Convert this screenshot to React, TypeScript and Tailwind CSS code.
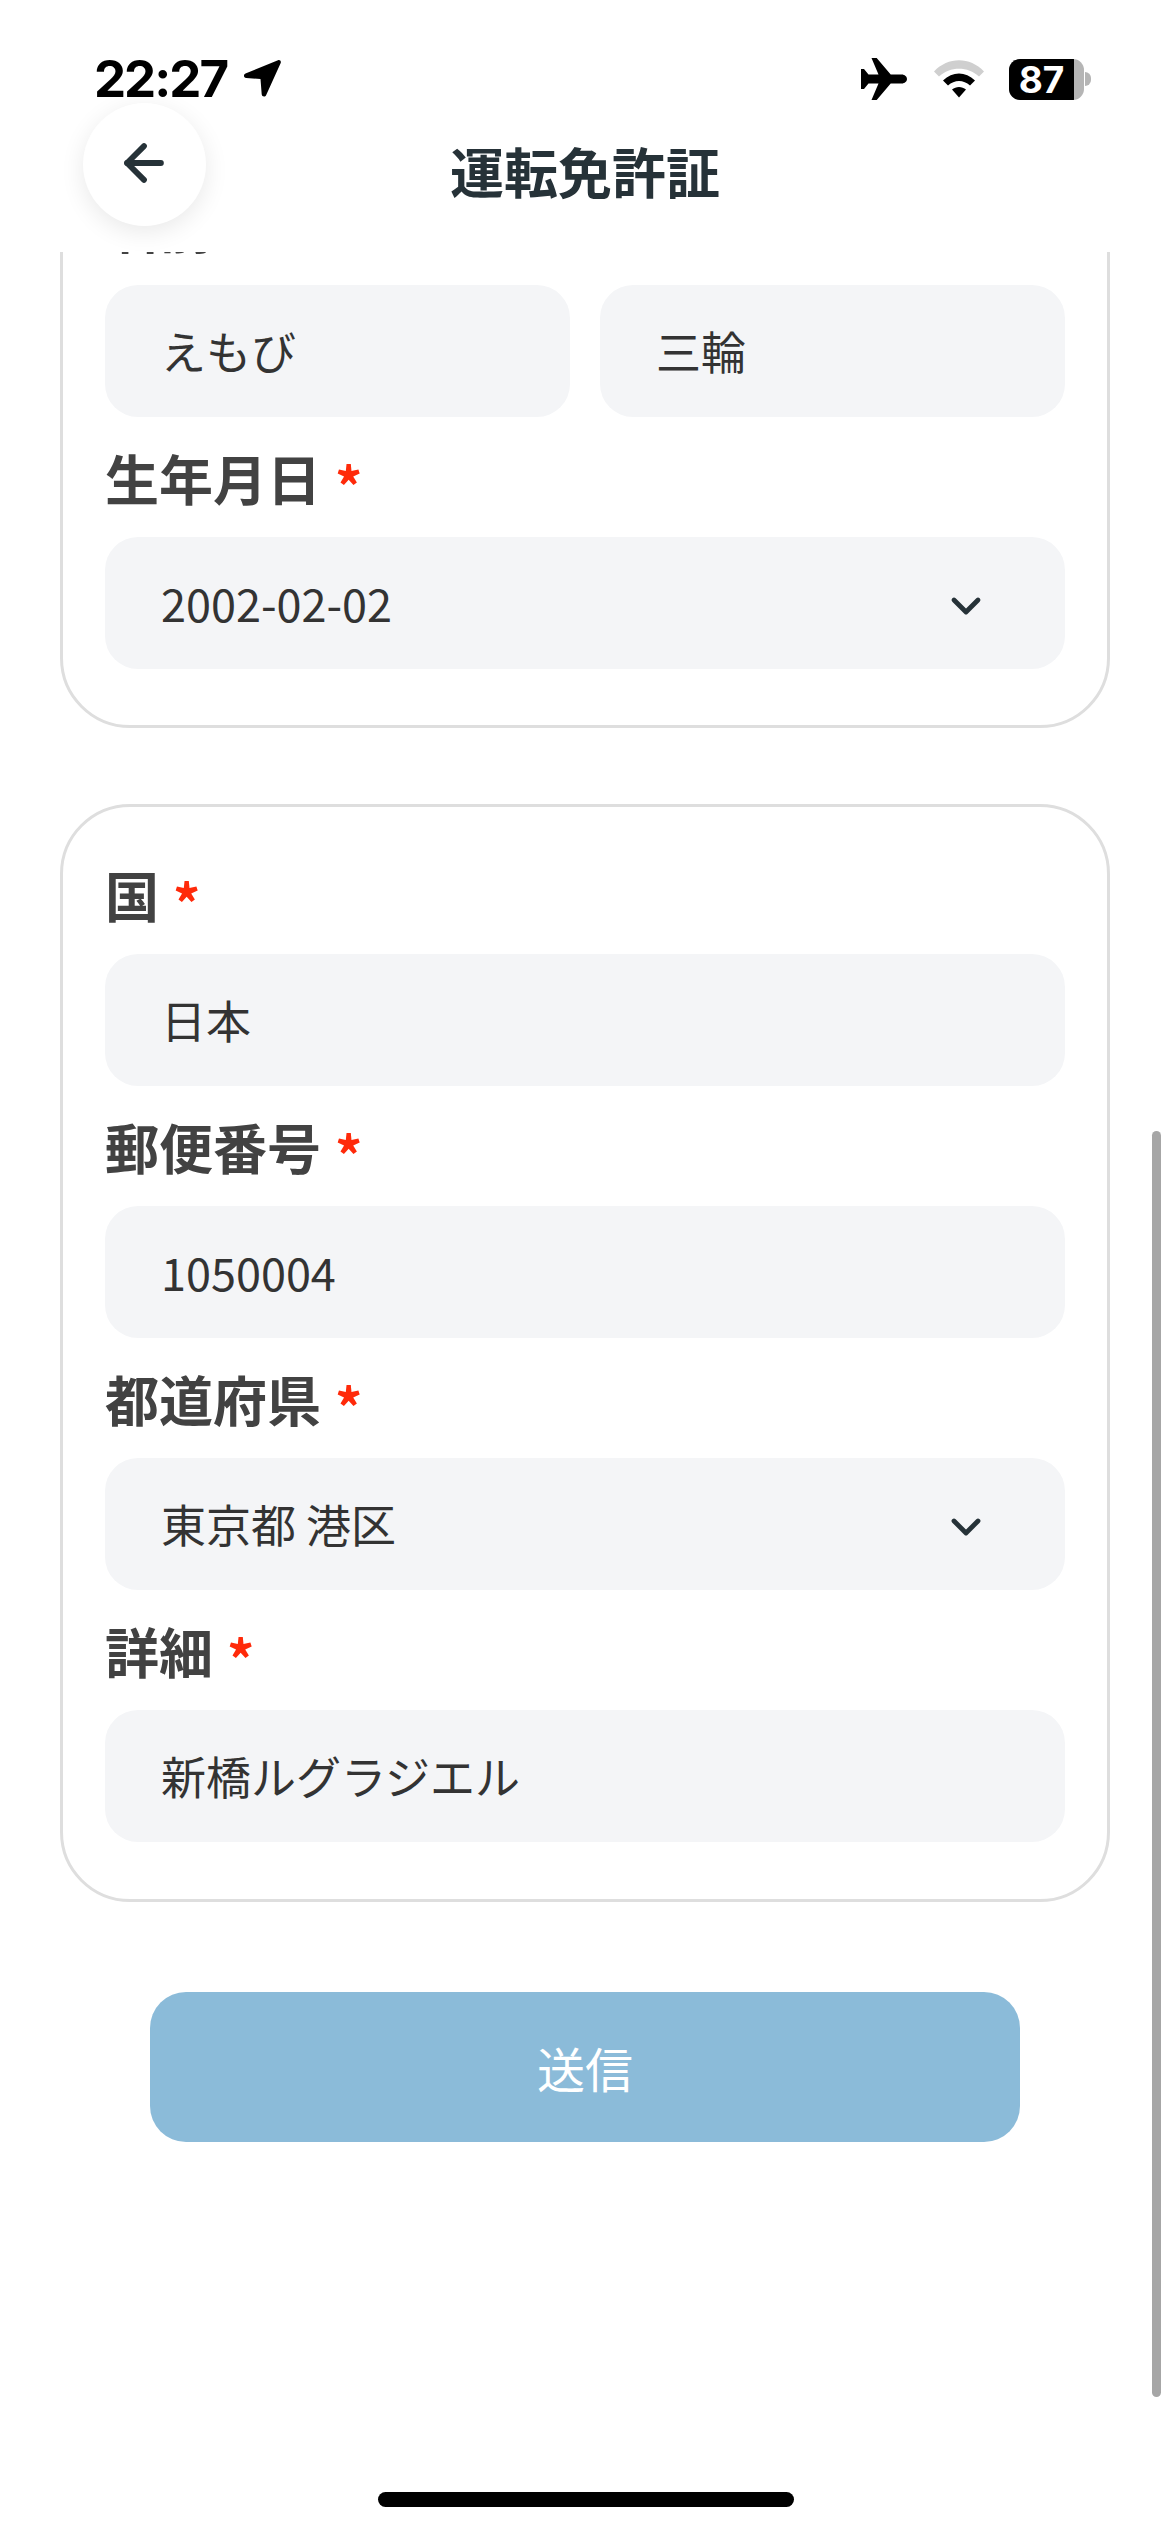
import React from "react";
import { ArrowLeft, ChevronDown } from "lucide-react";

const font = { fontFamily: '"Noto Sans CJK JP", "Noto Sans", sans-serif' };

function Label({ text }: { text: string }) {
  return (
    <div className="h-[120px] flex items-center pt-[1px] text-[54px] leading-none font-bold text-[#424242]">
      <span>{text}</span>
      <span className="ml-[14px] text-[#ff2a0a] translate-y-[7px]">*</span>
    </div>
  );
}

function Field({ value, chevron, className = "" }: { value: string; chevron?: boolean; className?: string }) {
  return (
    <div className={`h-[132px] rounded-[33px] bg-[#f4f5f7] flex items-center justify-between pl-[56px] pr-[75px] text-[45px] text-[#333333] ${className}`}>
      <span>{value}</span>
      {chevron && <ChevronDown size={48} strokeWidth={2.4} color="#263238" className="mt-[5px]" />}
    </div>
  );
}

function StatusBar() {
  return (
    <div className="h-[103px] flex justify-between items-start pt-[50px] pl-[94px] pr-[79px]">
      <div className="flex items-center h-[56px]">
        <span className="text-[51px] leading-none font-bold text-black tracking-[-2px]" style={{ fontFamily: "Inter, sans-serif" }}>22:27</span>
        <svg width="40" height="40" viewBox="0 0 40 40" className="ml-[15px]">
          <path d="M36 2.2 3.500 15.500c-2.400 1-1.900 4.300.7 4.500l14.300 1 1.200 15.300c.2 2.600 3.600 3 4.500.6L38.700 5c.7-1.900-1-3.600-2.700-2.800z" fill="#000" />
        </svg>
      </div>
      <div className="flex items-center h-[58px]">
        <svg width="46" height="42" viewBox="0 0 46 42">
          <path d="M10.500 0h5.200l14 16.500h11C43.800 16.500 46 18.700 46 21s-2.200 4.500-5.300 4.500h-11L15.700 42h-5.200L17.500 25.500H7.500L3 31H0V11h3l4.500 5.500h10z" fill="#000" />
        </svg>
        <svg width="50" height="38" viewBox="0 0 50 38" className="ml-[27px]">
          <path d="M0 11.500C14-3.500 36-3.500 50 11.500l-5 5C34 6 16 6 5 16.500z" fill="#cfcfcf" />
          <path d="M9 20.500c9.500-9.500 22.500-9.500 32 0l-5 5c-6.500-6-15.500-6-22 0z" fill="#000" />
          <path d="M18 29.500c4-3.500 10-3.500 14 0l-7 8z" fill="#000" />
        </svg>
        <div className="ml-[25px] flex items-center">
          <div className="w-[75px] h-[41px] rounded-[11px] overflow-hidden bg-[#b5b5b5] flex">
            <div className="w-[65px] h-full bg-black flex items-center justify-center">
              <span className="text-[37px] leading-none font-bold text-white" style={{ fontFamily: "Inter, sans-serif" }}>87</span>
            </div>
          </div>
          <div className="w-[6px] h-[14px] rounded-r-full bg-[#b5b5b5] ml-[1px]" />
        </div>
      </div>
    </div>
  );
}

export default function App() {
  return (
    <div className="relative w-[1170px] h-[2532px] overflow-hidden bg-white flex flex-col" style={font}>
      <header className="relative h-[252px] shrink-0 bg-white z-10">
        <StatusBar />
        <div className="absolute left-[83px] top-[103px] w-[123px] h-[123px] rounded-full bg-white shadow-[0_6px_24px_rgba(0,0,0,0.09)] flex items-center justify-center">
          <ArrowLeft size={58} strokeWidth={2.4} color="#263238" className="-mt-[4px] -ml-[2px]" />
        </div>
        <h1 className="absolute inset-x-0 top-[133px] text-center text-[54px] leading-[76px] font-bold text-[#263238]">運転免許証</h1>
      </header>

      <main className="flex-1 overflow-hidden">
        <div className="-mt-[116px] pl-[60px] w-[1170px]">
          <section className="w-[1050px] border-[3px] border-[#dedede] rounded-[70px] pt-[26px] pb-[56px] px-[42px]">
            <Label text="名前" />
            <div className="flex gap-[30px]">
              <Field value="えもび" className="flex-1" />
              <Field value="三輪" className="flex-1" />
            </div>
            <Label text="生年月日" />
            <Field value="2002-02-02" chevron />
          </section>

          <section className="mt-[76px] w-[1050px] border-[3px] border-[#dedede] rounded-[70px] pt-[27px] pb-[57px] px-[42px]">
            <Label text="国" />
            <Field value="日本" />
            <Label text="郵便番号" />
            <Field value="1050004" />
            <Label text="都道府県" />
            <Field value="東京都 港区" chevron />
            <Label text="詳細" />
            <Field value="新橋ルグラジエル" />
          </section>

          <div className="mt-[90px] w-[1050px] flex justify-center">
            <div className="w-[870px] h-[150px] rounded-[36px] bg-[#8bbbd9] flex items-center justify-center text-[48px] text-white">送信</div>
          </div>
        </div>
      </main>

      <div className="absolute left-[1152px] top-[1131px] w-[9px] h-[1266px] rounded-full bg-[#a6a6a6]" />
      <div className="absolute left-[378px] top-[2492px] w-[416px] h-[15px] rounded-full bg-black" />
    </div>
  );
}
